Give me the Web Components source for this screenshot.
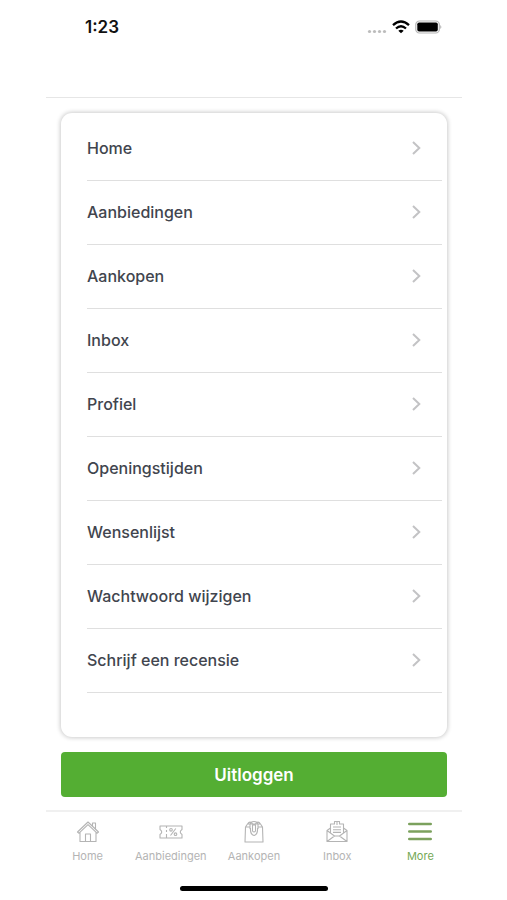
<!DOCTYPE html>
<html lang="nl">
<head>
<meta charset="utf-8">
<meta name="viewport" content="width=device-width, initial-scale=1">
<title>More</title>
<style>
body { margin: 0; background: #fff; font-family: Inter, "Liberation Sans", sans-serif; color: #41454e; }
</style>
</head>
<body>
<app-screen>
  <status-bar slot="top">1:23</status-bar>
  <menu-card>
    <menu-row>Home</menu-row>
    <menu-row>Aanbiedingen</menu-row>
    <menu-row>Aankopen</menu-row>
    <menu-row>Inbox</menu-row>
    <menu-row>Profiel</menu-row>
    <menu-row>Openingstijden</menu-row>
    <menu-row>Wensenlijst</menu-row>
    <menu-row>Wachtwoord wijzigen</menu-row>
    <menu-row>Schrijf een recensie</menu-row>
  </menu-card>
  <action-button>Uitloggen</action-button>
  <tab-bar slot="bottom">
    <tab-item icon="home">Home</tab-item>
    <tab-item icon="ticket">Aanbiedingen</tab-item>
    <tab-item icon="bag">Aankopen</tab-item>
    <tab-item icon="mail">Inbox</tab-item>
    <tab-item icon="menu" active>More</tab-item>
  </tab-bar>
</app-screen>
<script>
const define = (name, html, setup) => {
  const template = document.createElement('template');
  template.innerHTML = html;
  customElements.define(name, class extends HTMLElement {
    constructor() {
      super();
      this.attachShadow({ mode: 'open' }).append(template.content.cloneNode(true));
    }
    connectedCallback() { if (setup) setup(this); }
  });
};

define('app-screen', `
<style>
  :host { display: flex; flex-direction: column; min-height: 100vh; box-sizing: border-box; padding: 0 45px 0 46px; }
  main { display: flex; flex-direction: column; gap: 15px; padding: 15px 15px 13px; }
  .indicator { width: 148px; height: 5px; border-radius: 3px; background: #000; margin: auto auto 9px; }
</style>
<slot name="top"></slot>
<main><slot></slot></main>
<slot name="bottom"></slot>
<div class="indicator"></div>`);

define('status-bar', `
<style>
  :host { display: block; height: 97px; border-bottom: 1px solid #e6e6e6; }
  .bar { display: flex; justify-content: space-between; align-items: center; height: 54px; padding: 0 20px 0 39px; font-size: 17px; font-weight: 600; color: #111; }
  .icons { display: flex; align-items: center; gap: 5px; }
  svg { display: block; }
</style>
<div class="bar">
  <span><slot></slot></span>
  <div class="icons">
    <svg width="20" height="16" viewBox="0 0 20 16" fill="#bcbcbc"><circle cx="2.500" cy="12.500" r="1.6"/><circle cx="7.500" cy="12.500" r="1.6"/><circle cx="12.500" cy="12.500" r="1.6"/><circle cx="17.500" cy="12.500" r="1.6"/></svg>
    <svg width="18" height="14" viewBox="0 0 18 14" fill="none" stroke="#000" stroke-width="2.3"><path d="M1 5.2Q9-2.2 17 5.2M4 8.5Q9 4 14 8.5"/><path d="M9 13.3L6.3 10.7Q9 8.6 11.7 10.7Z" fill="#000" stroke="none"/></svg>
    <svg width="27" height="14" viewBox="0 0 27 14"><rect x="0.8" y="1" width="23.5" height="12" rx="3.6" fill="#fff" stroke="#b5b5b5" stroke-width="1.2"/><rect x="2.3" y="2.4" width="20.5" height="9.2" rx="1.8" fill="#000"/><path d="M25.3 5Q27.4 7 25.3 9Z" fill="#aaa"/></svg>
  </div>
</div>`);

define('menu-card', `
<style>
  :host { display: block; padding: 4px 5px 44px 26px; border-radius: 11px; background: #fff; box-shadow: 0 0 4px 1px rgba(0,0,0,.2); }
</style>
<nav aria-label="Menu"><slot></slot></nav>`);

define('menu-row', `
<style>
  :host { display: block; }
  a { display: flex; align-items: center; justify-content: space-between; box-sizing: border-box; height: 64px; padding: 0 21px 1px 0; border-bottom: 1px solid #dfdfdf; color: inherit; text-decoration: none; font-size: 16px; line-height: 24px; font-weight: 500; }
  svg { display: block; }
</style>
<a href="#"><span><slot></slot></span>
<svg width="10" height="14" viewBox="0 0 10 14" fill="none" stroke="#c3c3c5" stroke-width="2" aria-hidden="true"><path d="M2 1L8.300 7L2 13"/></svg></a>`);

define('action-button', `
<style>
  :host { display: block; }
  button { display: block; width: 100%; height: 45px; border: 0; border-radius: 4px; padding: 0; background: #54ae33; color: #fff; font: 600 17px/24px Inter, "Liberation Sans", sans-serif; }
</style>
<button type="button"><slot></slot></button>`);

define('tab-bar', `
<style>
  :host { display: block; border-top: 2px solid #f0f0f0; }
  nav { display: grid; grid-template-columns: repeat(5, minmax(0, 1fr)); }
</style>
<nav aria-label="Tabs"><slot></slot></nav>`);

const icons = {
  home: '<path d="M1.500 12L12 2L22.500 12L21 13.200L12 4.700L3 13.200ZM16.500 6V3H19.500V9M4 12.500V21.500H20V12.500M9.500 21.500V14H14.500V21.500"/>',
  ticket: '<path d="M1 6H23V9.500Q19.500 12 23 14.500V18H1V14.500Q4.500 12 1 9.500ZM7.500 6V8M7.500 10V12M7.500 14V18M16.800 8.500L11.500 15.500"/><circle cx="12" cy="9.800" r="1.300"/><circle cx="16.500" cy="14.200" r="1.300"/>',
  bag: '<path d="M3.500 7L5.500 4H18.500L20.500 7L21 22H3ZM3.500 7H8.500M15.500 7H20.500M8 9V4.500Q8.500 1.500 12 1.500Q15.500 1.500 16 4.500V9M8.500 8Q8 14.500 12 15.500Q16 14.500 15.500 8M10.500 5V11Q12 13 13.500 11V5ZM5.500 4Q8 .500 10.500 3.500M13.500 3.500Q16 .500 18.500 4"/>',
  mail: '<path d="M5.500 8L2 10.500V21.500H22V10.500L18.500 8M5.500 13V4H9.500V1.500H14.500V4H18.500V13M2 10.500L9.500 16H14.500L22 10.500M2 21.500L9.500 16M22 21.500L14.500 16M8 7H16M8 9.700H16M8 12.400H16M12 1.500V5"/>',
  menu: '<path d="M1.300 4H22.700M1.300 11.500H22.700M1.300 19H22.700" stroke-width="2.600" stroke="#7ba15d" stroke-linecap="round"/>'
};

define('tab-item', `
<style>
  :host { display: block; color: #b4b4b4; }
  :host([active]) { color: #75a956; }
  a { display: flex; flex-direction: column; align-items: center; gap: 5px; padding-top: 8px; color: inherit; text-decoration: none; font-size: 11px; line-height: 14px; font-weight: 400; white-space: nowrap; }
  svg { display: block; width: 24px; height: 24px; fill: none; stroke: currentColor; stroke-width: 1.1; stroke-linejoin: round; }
</style>
<a href="#"><svg viewBox="0 0 24 24" aria-hidden="true"></svg><span><slot></slot></span></a>`, el => {
  el.shadowRoot.querySelector('svg').innerHTML = icons[el.getAttribute('icon')];
  if (el.hasAttribute('active')) el.shadowRoot.querySelector('a').setAttribute('aria-current', 'page');
});
</script>
</body>
</html>
